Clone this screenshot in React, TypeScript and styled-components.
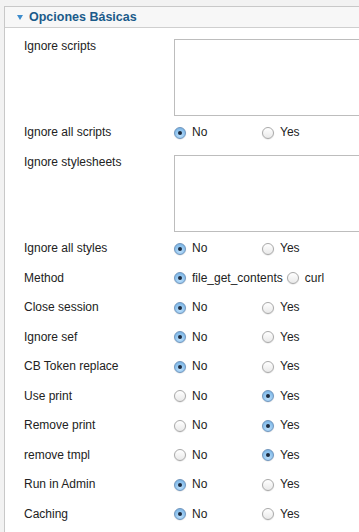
import React from "react";
import styled, { createGlobalStyle } from "styled-components";

const Global = createGlobalStyle`
  html, body { margin: 0; padding: 0; overflow: hidden; background: #f2f2f2; }
  body { font-family: "Liberation Sans", Arial, sans-serif; }
`;

const Page = styled.div`
  padding: 6px 0 0 4px;
  height: 532px;
  box-sizing: border-box;
`;

const Panel = styled.div`
  background: #fff;
  border: 1px solid #c8c8c8;
  border-right: none;
  border-bottom: none;
  height: 100%;
  overflow: hidden;
`;

const Header = styled.div`
  display: flex;
  align-items: center;
  gap: 6px;
  height: 20px;
  padding-left: 12px;
  background: #f7f7f7;
  border-bottom: 1px solid #cfcfcf;
`;

const Triangle = styled.span`
  width: 0;
  height: 0;
  border-left: 3.5px solid transparent;
  border-right: 3.5px solid transparent;
  border-top: 5px solid #3d8ccc;
  margin-top: 1px;
`;

const Title = styled.span`
  font-size: 12.5px;
  font-weight: bold;
  color: #1b5b8a;
`;

const Body = styled.div`
  padding-top: 3.5px;
`;

const Row = styled.div<{ $area?: boolean }>`
  display: grid;
  grid-template-columns: 150px 1fr;
  padding-left: 19px;
  align-items: ${(p) => (p.$area ? "start" : "center")};
  padding-top: ${(p) => (p.$area ? "7px" : "0")};
  padding-bottom: ${(p) => (p.$area ? "2.5px" : "0")};
  height: ${(p) => (p.$area ? "auto" : "29.5px")};
  box-sizing: border-box;
`;

const Label = styled.div`
  font-size: 12px;
  line-height: 15px;
  color: #222;
`;

const Area = styled.div`
  height: 75px;
  width: 260px;
  border: 1px solid #bdbdbd;
  background: #fff;
`;

const Group = styled.div`
  display: flex;
  align-items: center;
`;

const Option = styled.label`
  display: inline-flex;
  align-items: center;
  gap: 6px;
  min-width: 84px;
  margin-right: 4px;
  font-size: 12px;
  line-height: 15px;
  color: #222;
  white-space: nowrap;
`;

const Radio = styled.span<{ $on?: boolean }>`
  position: relative;
  flex: none;
  width: 12px;
  height: 12px;
  border-radius: 50%;
  box-sizing: border-box;
  border: 1px solid ${(p) => (p.$on ? "#6f95bd" : "#a9a9a9")};
  background: ${(p) =>
    p.$on
      ? "radial-gradient(circle at 50% 70%, #bfe0fb 0%, #8ec3ee 55%, #6ea9dc 100%)"
      : "linear-gradient(#ffffff, #e9e9e9)"};
  box-shadow: 0 0.5px 1px rgba(0, 0, 0, 0.15);
  &::after {
    content: "";
    display: ${(p) => (p.$on ? "block" : "none")};
    position: absolute;
    left: 50%;
    top: 50%;
    width: 4px;
    height: 4px;
    margin: -2px 0 0 -2px;
    border-radius: 50%;
    background: #1c2a3e;
  }
`;

type Field =
  | { kind: "area"; label: string }
  | { kind: "radio"; label: string; options: string[]; sel: number };

const fields: Field[] = [
  { kind: "area", label: "Ignore scripts" },
  { kind: "radio", label: "Ignore all scripts", options: ["No", "Yes"], sel: 0 },
  { kind: "area", label: "Ignore stylesheets" },
  { kind: "radio", label: "Ignore all styles", options: ["No", "Yes"], sel: 0 },
  { kind: "radio", label: "Method", options: ["file_get_contents", "curl"], sel: 0 },
  { kind: "radio", label: "Close session", options: ["No", "Yes"], sel: 0 },
  { kind: "radio", label: "Ignore sef", options: ["No", "Yes"], sel: 0 },
  { kind: "radio", label: "CB Token replace", options: ["No", "Yes"], sel: 0 },
  { kind: "radio", label: "Use print", options: ["No", "Yes"], sel: 1 },
  { kind: "radio", label: "Remove print", options: ["No", "Yes"], sel: 1 },
  { kind: "radio", label: "remove tmpl", options: ["No", "Yes"], sel: 1 },
  { kind: "radio", label: "Run in Admin", options: ["No", "Yes"], sel: 0 },
  { kind: "radio", label: "Caching", options: ["No", "Yes"], sel: 0 },
];

export default function App() {
  return (
    <>
      <Global />
      <Page>
        <Panel>
          <Header>
            <Triangle />
            <Title>Opciones Básicas</Title>
          </Header>
          <Body>
            {fields.map((f) =>
              f.kind === "area" ? (
                <Row key={f.label} $area>
                  <Label>{f.label}</Label>
                  <Area />
                </Row>
              ) : (
                <Row key={f.label}>
                  <Label>{f.label}</Label>
                  <Group>
                    {f.options.map((o, i) => (
                      <Option key={o}>
                        <Radio $on={i === f.sel} />
                        {o}
                      </Option>
                    ))}
                  </Group>
                </Row>
              )
            )}
          </Body>
        </Panel>
      </Page>
    </>
  );
}
